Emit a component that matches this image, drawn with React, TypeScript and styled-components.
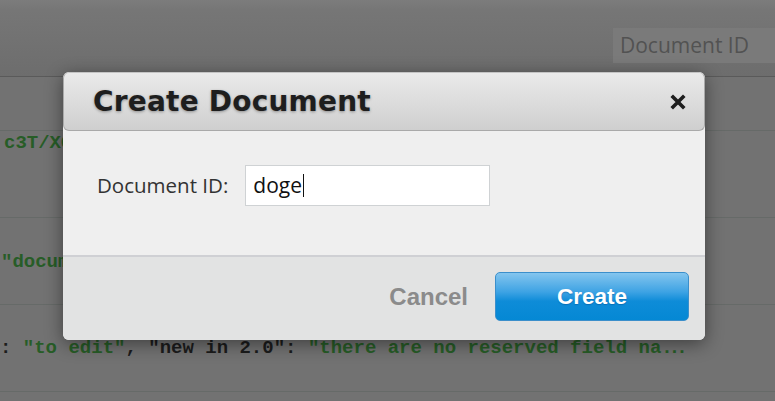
import React from "react";
import styled, { createGlobalStyle } from "styled-components";

const GlobalStyle = createGlobalStyle`
  html, body { margin: 0; padding: 0; }
  body { background: #727272; overflow: hidden; }
`;

const Page = styled.div`
  position: relative;
  width: 775px;
  height: 401px;
  overflow: hidden;
  background: #727272;
`;

const TopBar = styled.div`
  height: 77px;
  border-bottom: 1px solid #5a5a5a;
  background: linear-gradient(#7c7c7c 0px, #767676 10px, #6d6d6d 100%);
  display: flex;
  justify-content: flex-end;
  align-items: flex-start;
  padding-top: 28px;
  box-sizing: border-box;
`;

const SearchBox = styled.div`
  width: 162px;
  height: 35px;
  box-sizing: border-box;
  background: #7a7a7a;
  color: #525252;
  font-family: "Open Sans", sans-serif;
  font-size: 21px;
  line-height: 35px;
  padding-left: 7px;
  white-space: nowrap;
`;

const List = styled.div`
  display: flex;
  flex-direction: column;
`;

const Row = styled.div<{ $h: number; $pt: number }>`
  height: ${(p) => p.$h}px;
  border-bottom: 1px solid #666a68;
  box-sizing: border-box;
  padding-top: ${(p) => p.$pt}px;
`;

const Code = styled.div<{ $indent: number }>`
  font-family: "Liberation Mono", monospace;
  font-size: 19px;
  font-weight: bold;
  line-height: 24px;
  white-space: nowrap;
  color: #1c1c1c;
  padding-left: ${(p) => p.$indent}px;
`;

const Str = styled.span`
  color: #275d27;
`;

const Dots = styled.span`
  letter-spacing: -4px;
`;

const Modal = styled.div`
  position: absolute;
  left: 63px;
  top: 72px;
  width: 642px;
  height: 268px;
  background: #efefef;
  border-radius: 6px;
  box-shadow: 0 4px 18px rgba(0, 0, 0, 0.45);
  display: flex;
  flex-direction: column;
  overflow: hidden;
`;

const Header = styled.div`
  height: 59px;
  box-sizing: border-box;
  border: 1px solid #a9a9a9;
  border-top-color: #c4c4c4;
  border-radius: 6px;
  background: linear-gradient(#eaeaea, #cfcfcf);
  display: flex;
  align-items: center;
  justify-content: space-between;
  padding: 0 18px 0 29px;
`;

const Title = styled.h1`
  margin: 0;
  font-family: "DejaVu Sans", sans-serif;
  font-weight: bold;
  font-size: 28px;
  color: #1e1e1e;
  text-shadow: 0 1px 3px rgba(0, 0, 0, 0.35);
  letter-spacing: 0.2px;
`;

const Close = styled.button`
  border: 0;
  background: none;
  padding: 0;
  width: 16px;
  height: 16px;
  display: flex;
  cursor: pointer;
`;

const Body = styled.div`
  height: 124px;
  box-sizing: border-box;
  padding: 34px 0 0 34px;
  display: flex;
  align-items: flex-start;
  gap: 17px;
`;

const Label = styled.label`
  font-family: "Open Sans", sans-serif;
  font-size: 20.5px;
  color: #333;
  line-height: 41px;
`;

const FakeInput = styled.div`
  width: 245px;
  height: 41px;
  box-sizing: border-box;
  background: #fff;
  border: 1px solid #cfd2d4;
  font-family: "Open Sans", sans-serif;
  font-size: 21px;
  color: #111;
  line-height: 39px;
  padding-left: 7px;
  display: flex;
  align-items: center;
`;

const Caret = styled.span`
  display: inline-block;
  width: 1.5px;
  height: 23px;
  background: #111;
  margin-left: 1px;
`;

const Footer = styled.div`
  flex: 1;
  border-top: 2px solid #cfd0d4;
  background: #e2e3e3;
  display: flex;
  justify-content: flex-end;
  align-items: flex-start;
  padding: 15px 16px 0 0;
  gap: 27px;
`;

const CancelButton = styled.button`
  border: 0;
  background: none;
  padding: 0;
  height: 49px;
  font-family: "Liberation Sans", Arial, sans-serif;
  font-weight: bold;
  font-size: 24px;
  color: #8b8b8b;
  cursor: pointer;
`;

const CreateButton = styled.button`
  width: 194px;
  height: 49px;
  box-sizing: border-box;
  border: 1px solid #3b8fcb;
  border-radius: 5px;
  background: linear-gradient(#84c5ee 0%, #3ea3e4 40%, #0e8cd8 60%, #0588d4 100%);
  color: #fff;
  font-family: "Liberation Sans", Arial, sans-serif;
  font-weight: bold;
  font-size: 22.5px;
  text-shadow: 0 1px 1px rgba(0, 60, 120, 0.35);
  cursor: pointer;
  padding: 0;
`;

export default function App() {
  return (
    <>
      <GlobalStyle />
      <Page>
        <TopBar>
          <SearchBox>Document ID</SearchBox>
        </TopBar>
        <List>
          <Row $h={54} $pt={0} />
          <Row $h={87} $pt={0}>
            <Code $indent={4}>
              <Str>c3T/XOq8mZ1fWk0"</Str>
            </Code>
          </Row>
          <Row $h={87} $pt={32}>
            <Code $indent={1}>
              <Str>"document": "to edit"</Str>
            </Code>
          </Row>
          <Row $h={87} $pt={31}>
            <Code $indent={0}>
              : <Str>"to edit"</Str>, "new in 2.0": <Str>"there are no reserved field na<Dots>...</Dots></Str>
            </Code>
          </Row>
        </List>
        <Modal>
          <Header>
            <Title>Create Document</Title>
            <Close aria-label="Close">
              <svg width="16" height="16" viewBox="0 0 16 16">
                <path d="M3 3 L13 13 M13 3 L3 13" stroke="#1e1e1e" strokeWidth="3.6" strokeLinecap="square" />
              </svg>
            </Close>
          </Header>
          <Body>
            <Label>Document ID:</Label>
            <FakeInput>
              doge
              <Caret />
            </FakeInput>
          </Body>
          <Footer>
            <CancelButton>Cancel</CancelButton>
            <CreateButton>Create</CreateButton>
          </Footer>
        </Modal>
      </Page>
    </>
  );
}
